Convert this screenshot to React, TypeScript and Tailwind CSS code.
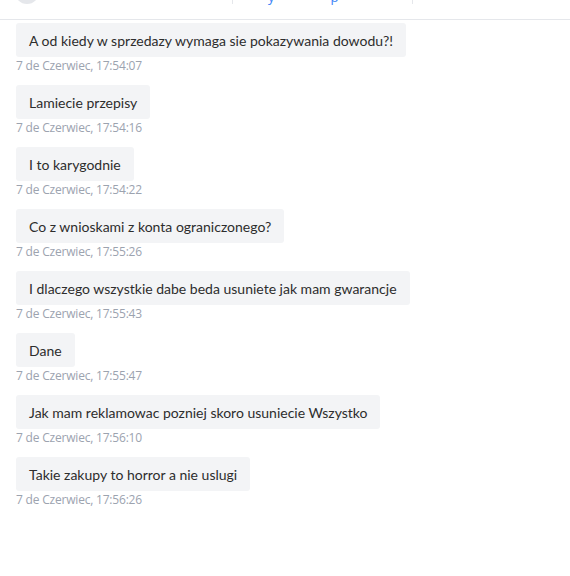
import React from "react";

const messages = [
  { text: "A od kiedy w sprzedazy wymaga sie pokazywania dowodu?!", time: "7 de Czerwiec, 17:54:07" },
  { text: "Lamiecie przepisy", time: "7 de Czerwiec, 17:54:16" },
  { text: "I to karygodnie", time: "7 de Czerwiec, 17:54:22" },
  { text: "Co z wnioskami z konta ograniczonego?", time: "7 de Czerwiec, 17:55:26" },
  { text: "I dlaczego wszystkie dabe beda usuniete jak mam gwarancje", time: "7 de Czerwiec, 17:55:43" },
  { text: "Dane", time: "7 de Czerwiec, 17:55:47" },
  { text: "Jak mam reklamowac pozniej skoro usuniecie Wszystko", time: "7 de Czerwiec, 17:56:10" },
  { text: "Takie zakupy to horror a nie uslugi", time: "7 de Czerwiec, 17:56:26" },
];

export default function App() {
  return (
    <div
      className="w-[570px] h-[576px] bg-white overflow-hidden"
      style={{ fontFamily: '"Open Sans", "Noto Sans", sans-serif' }}
    >
      <div className="h-[20px] border-b border-[#e5e7eb] overflow-hidden">
        <div className="flex items-end h-[24px] mt-[-20px]">
          <div className="ml-[15px] w-[24px] h-[24px] rounded-full bg-[#e5e7eb] shrink-0" />
          <div className="ml-[193px] w-[181px] h-[24px] border-l border-r border-[#e5e7eb] pl-[35px] flex items-end gap-[56px]">
            <span className="text-[13px] leading-[14px] text-[#3b82f6]">y</span>
            <span className="text-[13px] leading-[14px] text-[#3b82f6]">p</span>
          </div>
        </div>
      </div>
      <div
        className="pl-4 pt-[3px] flex flex-col items-start gap-[11px]"
        style={{ fontFamily: 'Lato, "Open Sans", sans-serif' }}
      >
        {messages.map((m, i) => (
          <div key={i} className="flex flex-col items-start">
            <div className="bg-[#f3f4f6] rounded-[3px] px-[13px] h-[34px] flex items-center text-[14px] text-[#2d2d2d] whitespace-nowrap">
              {m.text}
            </div>
            <div
              className="text-[12px] leading-[16px] mt-[1px] text-[#9ca3af] tracking-[-0.2px]"
              style={{ fontFamily: '"Open Sans", sans-serif' }}
            >
              {m.time}
            </div>
          </div>
        ))}
      </div>
    </div>
  );
}
